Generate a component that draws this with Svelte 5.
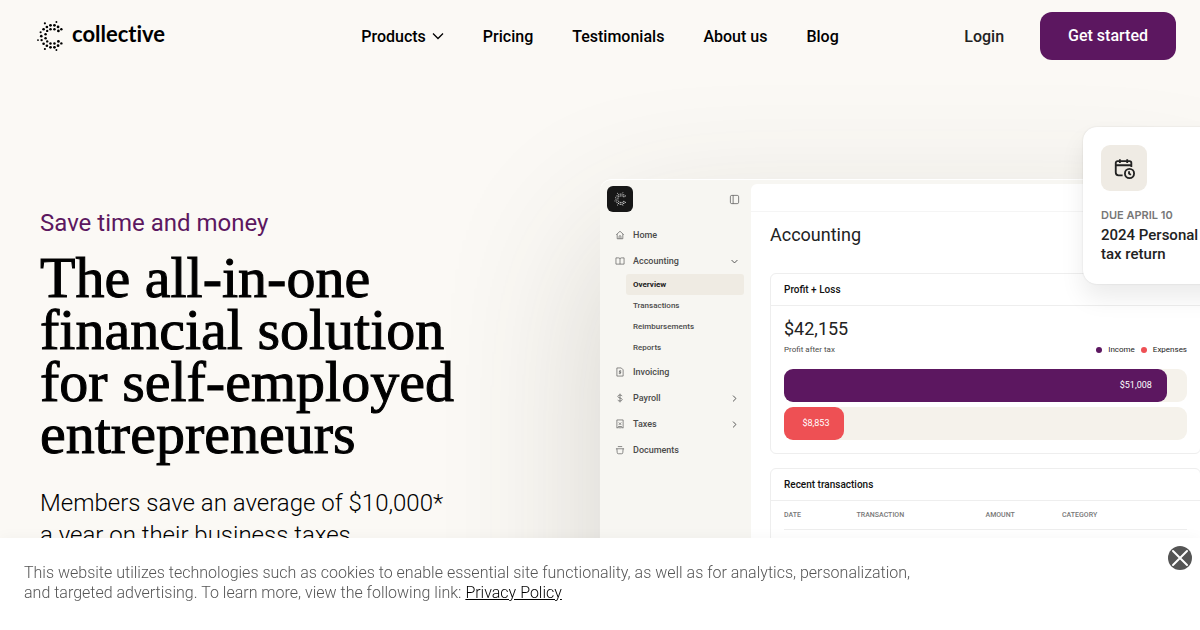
<script lang="ts">
	const links = ['Pricing', 'Testimonials', 'About us', 'Blog'];

	const subItems = ['Overview', 'Transactions', 'Reimbursements', 'Reports'];

	const columns = ['Date', 'Transaction', 'Amount', 'Category'];

	const bars = [
		{ label: '$51,008', share: 95, kind: 'income' },
		{ label: '$8,853', share: 15, kind: 'expenses' }
	];

	// x, y, radius of each dot in the mark, on a 78 x 91 grid
	const dots = [
		[58, 3, 2.9], [23, 7, 3.3], [40, 13, 4.2], [52, 13, 4.2], [29, 18, 4], [63, 18, 4.2],
		[19, 25, 4], [73, 25, 3.7], [40, 25, 3.8], [52, 25, 3.8], [30, 30, 3.6], [64, 30, 4.2],
		[10, 34, 3.3], [25, 40, 3.8], [12, 46, 4], [2, 58, 2.9], [25, 52, 3.8], [13, 58, 3.6],
		[30, 62, 3.6], [64, 62, 4.2], [40, 68, 3.8], [52, 68, 3.8], [19, 69, 4], [73, 68, 3.7],
		[29, 75, 4], [63, 75, 4.2], [40, 80, 4.2], [52, 80, 4.2], [23, 85, 3.3], [58, 88, 2.9]
	];

	let menuOpen = $state(false);
	let showBanner = $state(true);
</script>

{#snippet mark()}
	<svg viewBox="-1 0 79 91" fill="currentColor" aria-hidden="true">
		{#each dots as [cx, cy, r]}
			<circle {cx} {cy} {r} />
		{/each}
	</svg>
{/snippet}

{#snippet navIcon(name: string)}
	<svg class="icon" viewBox="0 0 16 16" aria-hidden="true">
		{#if name === 'Home'}
			<path d="M2 7.500 8 2l6 5.500M3.500 6.500V14h9V6.500M6.500 14v-3.500a1.500 1.500 0 0 1 3 0V14" />
		{:else if name === 'Accounting'}
			<path d="M1.500 3h4.500a2 2 0 0 1 2 1.500A2 2 0 0 1 10 3h4.500v10H1.500zM8 4.500V13" />
		{:else if name === 'Invoicing'}
			<path d="M3 1.500h7l3 3v10H3zM10 6.500C7 5.500 6 7.500 8 8s2 2.500-2 1.800M8 5.200v6.300" />
		{:else if name === 'Payroll'}
			<path d="M11.500 5C11 2.500 4.500 2.500 4.500 5.500S11.500 7.500 11.500 10.500 4.500 13.500 4.500 11M8 1v14" />
		{:else if name === 'Taxes'}
			<path d="M3 1.500h10v13l-2-1-1.500 1-1.500-1-1.500 1-1.500-1-2 1zM6 5.500l4 4M6 9.500l4-4M5 12h6" />
		{:else}
			<path d="M1.500 6h13M4.500 2.500h7M3 6l.5 6a2 2 0 0 0 2 2h5a2 2 0 0 0 2-2L13 6" />
		{/if}
	</svg>
{/snippet}

{#snippet chevron()}
	<svg class="chevron" viewBox="0 0 12 12" aria-hidden="true"><path d="m1 3.500 5 5 5-5" /></svg>
{/snippet}

<div class="page">
	<header>
		<a class="logo" href="/">{@render mark()}<span>collective</span></a>
		<nav aria-label="Main">
			<button type="button" aria-expanded={menuOpen} onclick={() => (menuOpen = !menuOpen)}>
				Products {@render chevron()}
			</button>
			{#each links as link}
				<a href="/">{link}</a>
			{/each}
		</nav>
		<div class="account">
			<a class="login" href="/login">Login</a>
			<a class="cta" href="/start">Get started</a>
		</div>
	</header>

	<main>
		<section class="copy">
			<p class="eyebrow">Save time and money</p>
			<h1>The all-in-one financial solution for self-employed entrepreneurs</h1>
			<p class="lead">Members save an average of $10,000*<br />a year on their business taxes.</p>
		</section>

		<section class="preview" aria-label="Dashboard">
			<div class="app">
				<aside>
					<div class="side-top">
						<span class="app-logo">{@render mark()}</span>
						<button type="button" aria-label="Toggle sidebar">
							<svg class="icon" viewBox="0 0 16 16"><rect x="2" y="2" width="12" height="12" rx="2" /><path d="M6 2v12" /></svg>
						</button>
					</div>
					<ul>
						<li><a href="/">{@render navIcon('Home')}Home</a></li>
						<li>
							<a href="/">{@render navIcon('Accounting')}Accounting{@render chevron()}</a>
							<ul class="sub">
								{#each subItems as item, i}
									<li><a href="/" class:active={i === 0}>{item}</a></li>
								{/each}
							</ul>
						</li>
						<li><a href="/">{@render navIcon('Invoicing')}Invoicing</a></li>
						<li class="closed"><a href="/">{@render navIcon('Payroll')}Payroll{@render chevron()}</a></li>
						<li class="closed"><a href="/">{@render navIcon('Taxes')}Taxes{@render chevron()}</a></li>
						<li><a href="/">{@render navIcon('Documents')}Documents</a></li>
					</ul>
				</aside>

				<div class="content">
					<div class="topbar"></div>
					<h2>Accounting</h2>

					<div class="card">
						<h3>Profit + Loss</h3>
						<div class="profit">
							<p class="total">$42,155</p>
							<div class="legend">
								<span>Profit after tax</span>
								<span class="key income">Income</span>
								<span class="key expenses">Expenses</span>
							</div>
							{#each bars as bar}
								<div class="track">
									<div class="bar {bar.kind}" style:width="{bar.share}%">{bar.label}</div>
								</div>
							{/each}
						</div>
					</div>

					<div class="card">
						<h3>Recent transactions</h3>
						<div class="table-wrap">
							<table>
								<thead>
									<tr>
										{#each columns as column}
											<th scope="col">{column}</th>
										{/each}
									</tr>
								</thead>
							</table>
						</div>
					</div>
				</div>
			</div>

			<div class="due">
				<span class="due-icon">
					<svg viewBox="0 0 24 24" aria-hidden="true">
						<path d="M10.500 20H6a3 3 0 0 1-3-3V6.500a2 2 0 0 1 2-2h13a2 2 0 0 1 2 2V11M3 9h17M7.500 2.500v4M15.500 2.500v4" />
						<circle cx="18" cy="18" r="5" />
						<path d="M17.500 15.500V18l2 1.500" />
					</svg>
				</span>
				<p class="due-date">DUE APRIL 10</p>
				<p class="due-title">2024 Personal<br />tax return</p>
			</div>
		</section>
	</main>

	{#if showBanner}
		<div class="banner" role="region" aria-label="Cookie notice">
			<p>
				This website utilizes technologies such as cookies to enable essential site functionality, as well
				as for analytics, personalization, and targeted advertising. To learn more, view the following link:
				<a href="/privacy">Privacy Policy</a>
			</p>
			<button type="button" aria-label="Close" onclick={() => (showBanner = false)}>
				<svg viewBox="0 0 24 24"><circle cx="12" cy="12" r="12" /><path d="m5 5 14 14M19 5 5 19" /></svg>
			</button>
		</div>
	{/if}
</div>

<style>
	:global(body) {
		margin: 0;
		background: #fbf9f5;
	}
	.page {
		height: 100vh;
		overflow: hidden;
		font-family: Roboto, 'Liberation Sans', sans-serif;
		color: #000;
	}
	h1, h2, h3, p, ul {
		margin: 0;
		padding: 0;
	}
	ul {
		list-style: none;
	}
	a {
		color: inherit;
		text-decoration: none;
	}
	button {
		padding: 0;
		border: 0;
		background: none;
		color: inherit;
		font: inherit;
		cursor: pointer;
	}
	svg {
		display: block;
	}
	.icon, .chevron {
		flex: none;
		fill: none;
		stroke: currentColor;
	}

	header {
		position: relative;
		z-index: 1;
		display: grid;
		grid-template-columns: 1fr auto 1fr;
		align-items: center;
		height: 72px;
		padding: 0 24px;
		box-sizing: border-box;
		font-size: 16px;
		font-weight: 500;
	}
	.logo {
		display: flex;
		align-items: center;
		gap: 9px;
		margin-left: 13px;
		font-family: Lato, sans-serif;
		font-size: 22px;
		font-variant-ligatures: none;
		font-weight: 700;
		line-height: 32px;
	}
	.logo svg {
		width: 26px;
		height: 32px;
	}
	.logo span {
		padding-bottom: 4px;
	}
	nav {
		display: flex;
		gap: 39px;
	}
	nav button {
		display: flex;
		align-items: center;
		gap: 6px;
	}
	nav .chevron {
		width: 12px;
		height: 12px;
		stroke-width: 1.3;
	}
	.account {
		display: flex;
		align-items: center;
		justify-content: flex-end;
		gap: 36px;
	}
	.login {
		color: #222;
	}
	.cta {
		padding: 0 28px;
		border-radius: 12px;
		background: #5c1760;
		color: #fff;
		line-height: 48px;
	}

	main {
		display: grid;
		grid-template-columns: 1fr 1fr;
	}
	.copy {
		padding: 135px 0 0 40px;
	}
	.eyebrow, .lead {
		font-size: 24px;
		line-height: 32px;
	}
	.eyebrow {
		margin-bottom: 13px;
		color: #5c1760;
	}
	h1 {
		max-width: 440px;
		font-family: 'Liberation Serif', serif;
		font-size: 58px;
		font-weight: 400;
		line-height: 52px;
		-webkit-text-stroke: 1px currentColor;
	}
	.lead {
		margin-top: 27px;
		font-weight: 300;
	}

	.preview {
		position: relative;
		padding-top: 107px;
	}
	.app {
		display: flex;
		width: calc(100% + 20px);
		min-height: 520px;
		box-sizing: border-box;
		border-top: 1px solid #fff;
		border-radius: 12px 0 0 0;
		background: #f7f6f2;
		box-shadow: 0 60px 160px rgb(60 60 50 / 20%);
		color: #4b4b4b;
	}
	aside {
		flex: none;
		width: 151px;
		padding: 6px 7px;
		box-sizing: border-box;
		font-size: 9px;
		font-weight: 500;
	}
	.side-top {
		display: flex;
		align-items: center;
		justify-content: space-between;
		margin-bottom: 10px;
		padding-right: 4px;
	}
	.app-logo {
		display: grid;
		place-items: center;
		width: 26px;
		height: 26px;
		border-radius: 6px;
		background: #171717;
		color: #ddd;
	}
	.app-logo svg {
		width: 12px;
		height: 14px;
	}
	.side-top .icon {
		width: 11px;
		height: 11px;
	}
	aside li a {
		display: flex;
		align-items: center;
		gap: 8px;
		padding-left: 8px;
		line-height: 26px;
	}
	aside .icon {
		width: 10px;
		height: 10px;
	}
	aside .chevron {
		width: 7px;
		height: 7px;
		margin: 0 6px 0 auto;
		stroke-width: 1.6;
	}
	.closed .chevron {
		transform: rotate(-90deg);
	}
	.sub {
		margin-left: 19px;
		padding-bottom: 1px;
		font-size: 8px;
	}
	aside .sub a {
		padding-left: 7px;
		line-height: 21px;
	}
	aside .sub .active {
		border-radius: 3px;
		background: #efebe3;
		color: #222;
		font-weight: 700;
	}

	.content {
		flex: 1;
		margin-top: 4px;
		padding: 0 19px;
		border-radius: 6px 0 0 0;
		background: #fff;
	}
	.topbar {
		height: 27px;
		margin: 0 -19px;
		border-bottom: 1px solid #f5f5f5;
	}
	h2 {
		margin: 10px 0 25px;
		color: #222;
		font-size: 18px;
		font-weight: 400;
		line-height: 26px;
	}
	.card {
		margin-bottom: 14px;
		border: 1px solid #eee;
		border-radius: 6px;
	}
	h3 {
		padding: 0 13px;
		border-bottom: 1px solid #eee;
		color: #111;
		font-size: 10px;
		font-weight: 500;
		line-height: 31px;
	}
	.profit {
		padding: 10px 13px 13px;
	}
	.total {
		color: #222;
		font-size: 18px;
		line-height: 26px;
	}
	.legend {
		display: flex;
		gap: 6px;
		margin-bottom: 12px;
		font-size: 8px;
		line-height: 15px;
	}
	.legend span:first-child {
		margin-right: auto;
	}
	.key {
		display: flex;
		align-items: center;
		gap: 6px;
		color: #222;
	}
	.key::before {
		content: '';
		width: 6px;
		height: 6px;
		border-radius: 50%;
		background: #5c1760;
	}
	.key.expenses::before {
		background: #ee5054;
	}
	.track {
		border-radius: 9px;
		background: #f5f2eb;
	}
	.track + .track {
		margin-top: 5px;
	}
	.bar {
		padding: 0 15px;
		border-radius: 9px;
		box-sizing: border-box;
		background: #5c1760;
		color: #fff;
		font-size: 9px;
		line-height: 33px;
		text-align: right;
	}
	.bar.expenses {
		background: #ee5054;
	}
	.table-wrap {
		height: 120px;
		padding: 0 13px;
	}
	table {
		width: 100%;
		border-collapse: collapse;
		table-layout: fixed;
	}
	th {
		padding: 0;
		border-bottom: 1px solid #eee;
		color: #777;
		font-size: 7px;
		font-weight: 500;
		line-height: 28px;
		text-align: left;
		text-transform: uppercase;
	}
	th:nth-child(1) { width: 18%; }
	th:nth-child(2) { width: 32%; }
	th:nth-child(3) { width: 19%; }

	/* reminder that hangs off the right edge of the dashboard */
	.due {
		position: absolute;
		top: 55px;
		right: -43px;
		width: 160px;
		padding: 18px 18px 20px;
		box-sizing: border-box;
		border-radius: 14px;
		background: #fff;
		box-shadow: 0 0 2px rgb(0 0 0 / 12%), 0 14px 24px rgb(0 0 0 / 8%);
		color: #222;
		font-weight: 500;
	}
	.due-icon {
		display: grid;
		place-items: center;
		width: 46px;
		height: 46px;
		margin-bottom: 15px;
		border-radius: 9px;
		background: #efebe4;
	}
	.due-icon svg {
		width: 22px;
		height: 22px;
		fill: none;
		stroke: #222;
		stroke-width: 2;
	}
	.due-date {
		margin-bottom: 2px;
		color: #777;
		font-family: Inter, sans-serif;
		font-size: 11px;
		font-weight: 600;
		line-height: 18px;
		white-space: nowrap;
	}
	.due-title {
		font-size: 15px;
		line-height: 19px;
		white-space: nowrap;
	}

	.banner {
		position: fixed;
		right: 0;
		bottom: 0;
		left: 0;
		z-index: 2;
		display: flex;
		align-items: flex-start;
		justify-content: space-between;
		padding: 8px 8px 27px 24px;
		background: #fff;
		box-shadow: 0 0 14px rgb(0 0 0 / 4%);
		color: #555;
		font-size: 16px;
		font-weight: 300;
		line-height: 20px;
	}
	.banner p {
		max-width: 900px;
		padding-top: 17px;
	}
	.banner a {
		color: #000;
		text-decoration: underline;
	}
	.banner svg {
		width: 24px;
		height: 24px;
	}
	.banner circle {
		fill: #555;
	}
	.banner path {
		stroke: #fff;
		stroke-width: 2;
		stroke-linecap: round;
	}
</style>
